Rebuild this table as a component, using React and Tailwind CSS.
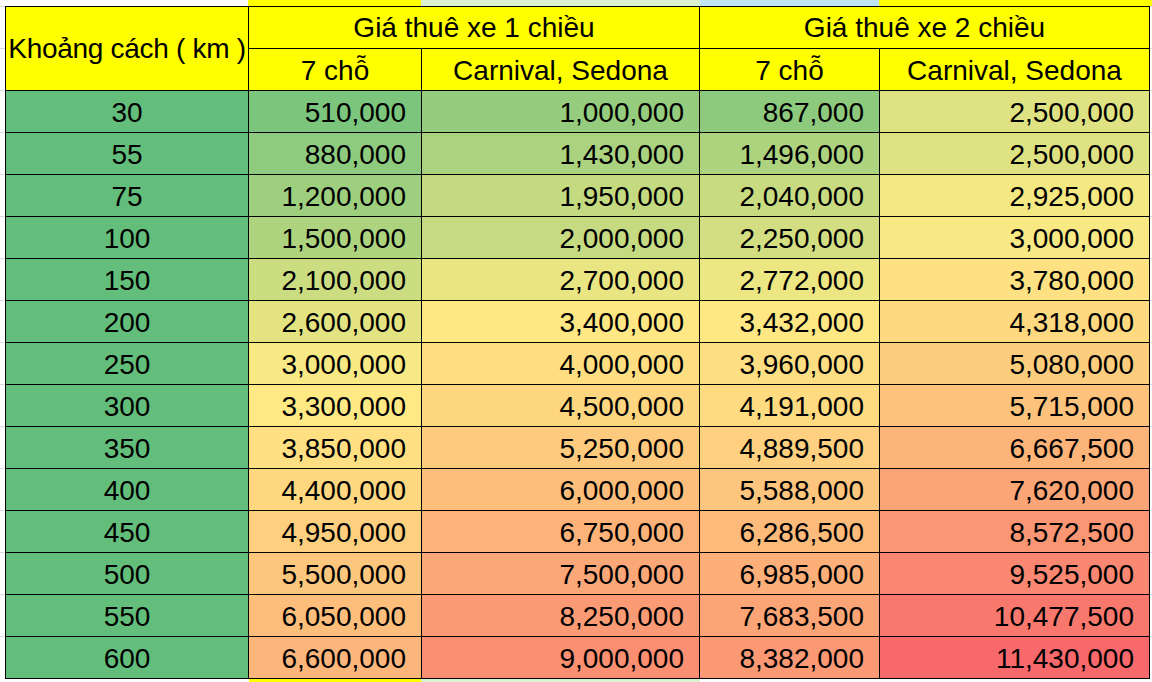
import React from "react";

const rows = [
  [30, 510000, 1000000, 867000, 2500000],
  [55, 880000, 1430000, 1496000, 2500000],
  [75, 1200000, 1950000, 2040000, 2925000],
  [100, 1500000, 2000000, 2250000, 3000000],
  [150, 2100000, 2700000, 2772000, 3780000],
  [200, 2600000, 3400000, 3432000, 4318000],
  [250, 3000000, 4000000, 3960000, 5080000],
  [300, 3300000, 4500000, 4191000, 5715000],
  [350, 3850000, 5250000, 4889500, 6667500],
  [400, 4400000, 6000000, 5588000, 7620000],
  [450, 4950000, 6750000, 6286500, 8572500],
  [500, 5500000, 7500000, 6985000, 9525000],
  [550, 6050000, 8250000, 7683500, 10477500],
  [600, 6600000, 9000000, 8382000, 11430000],
];

const MIN = 30;
const MID = 3150000;
const MAX = 11430000;
const G = [99, 190, 123];
const Y = [255, 235, 132];
const R = [248, 105, 107];

function scale(v) {
  let a, b, t;
  if (v <= MID) {
    a = G; b = Y; t = (v - MIN) / (MID - MIN);
  } else {
    a = Y; b = R; t = (v - MID) / (MAX - MID);
  }
  t = Math.max(0, Math.min(1, t));
  const c = a.map((x, i) => Math.round(x + (b[i] - x) * t));
  return `rgb(${c[0]},${c[1]},${c[2]})`;
}

const fmt = (n) => n.toLocaleString("en-US");

const font = { fontFamily: '"Liberation Sans", Arial, sans-serif' };

export default function App() {
  return (
    <div
      className="w-[1152px] h-[682px] bg-white overflow-hidden flex flex-col text-black text-[28px]"
      style={font}
    >
      <div className="flex h-[6px] shrink-0">
        <div className="w-[248px] bg-white" />
        <div className="w-[173px] bg-[#ffff00]" />
        <div className="w-[279px] bg-[#daf2d0]" />
        <div className="w-[179px] bg-[#c0e6f5]" />
        <div className="flex-1 bg-[#ffff00]" />
      </div>
      <div className="flex shrink-0">
        <div className="w-[5px] flex flex-col">
          {Array.from({ length: 16 }).map((_, i) => (
            <div key={i} className="h-[42px] border-t border-[#d9d9d9]" />
          ))}
        </div>
        <div className="grid grid-cols-[242px_172px_277px_179px_269px] gap-px bg-black p-px">
          <div className="row-span-2 bg-[#ffff00] flex items-center justify-center whitespace-nowrap leading-[32px] tracking-[-0.3px] overflow-visible">
            Khoảng cách ( km )
          </div>
          <div className="col-span-2 h-[41px] bg-[#ffff00] text-center pt-[5px] leading-[32px] whitespace-nowrap">
            Giá thuê xe 1 chiều
          </div>
          <div className="col-span-2 h-[41px] bg-[#ffff00] text-center pt-[5px] leading-[32px] whitespace-nowrap">
            Giá thuê xe 2 chiều
          </div>
          <div className="h-[41px] bg-[#ffff00] text-center pt-[6px] leading-[32px]">7 chỗ</div>
          <div className="h-[41px] bg-[#ffff00] text-center pt-[6px] leading-[32px]">Carnival, Sedona</div>
          <div className="h-[41px] bg-[#ffff00] text-center pt-[6px] leading-[32px]">7 chỗ</div>
          <div className="h-[41px] bg-[#ffff00] text-center pt-[6px] leading-[32px]">Carnival, Sedona</div>
          {rows.map((r) =>
            r.map((v, j) => (
              <div
                key={`${r[0]}-${j}`}
                className={`h-[41px] pt-[6px] leading-[32px] whitespace-nowrap ${
                  j === 0 ? "text-center" : "text-right pr-[15px]"
                }`}
                style={{ backgroundColor: scale(v) }}
              >
                {j === 0 ? v : fmt(v)}
              </div>
            ))
          )}
        </div>
        <div className="flex-1 flex flex-col">
          {Array.from({ length: 16 }).map((_, i) => (
            <div key={i} className="h-[42px] border-t border-[#d9d9d9]" />
          ))}
        </div>
      </div>
      <div className="flex flex-1">
        <div className="w-[249px] bg-white" />
        <div className="w-[172px] bg-[#ffff00]" />
        <div className="w-[279px] bg-[#daf2d0]" />
        <div className="flex-1 bg-white" />
      </div>
    </div>
  );
}
